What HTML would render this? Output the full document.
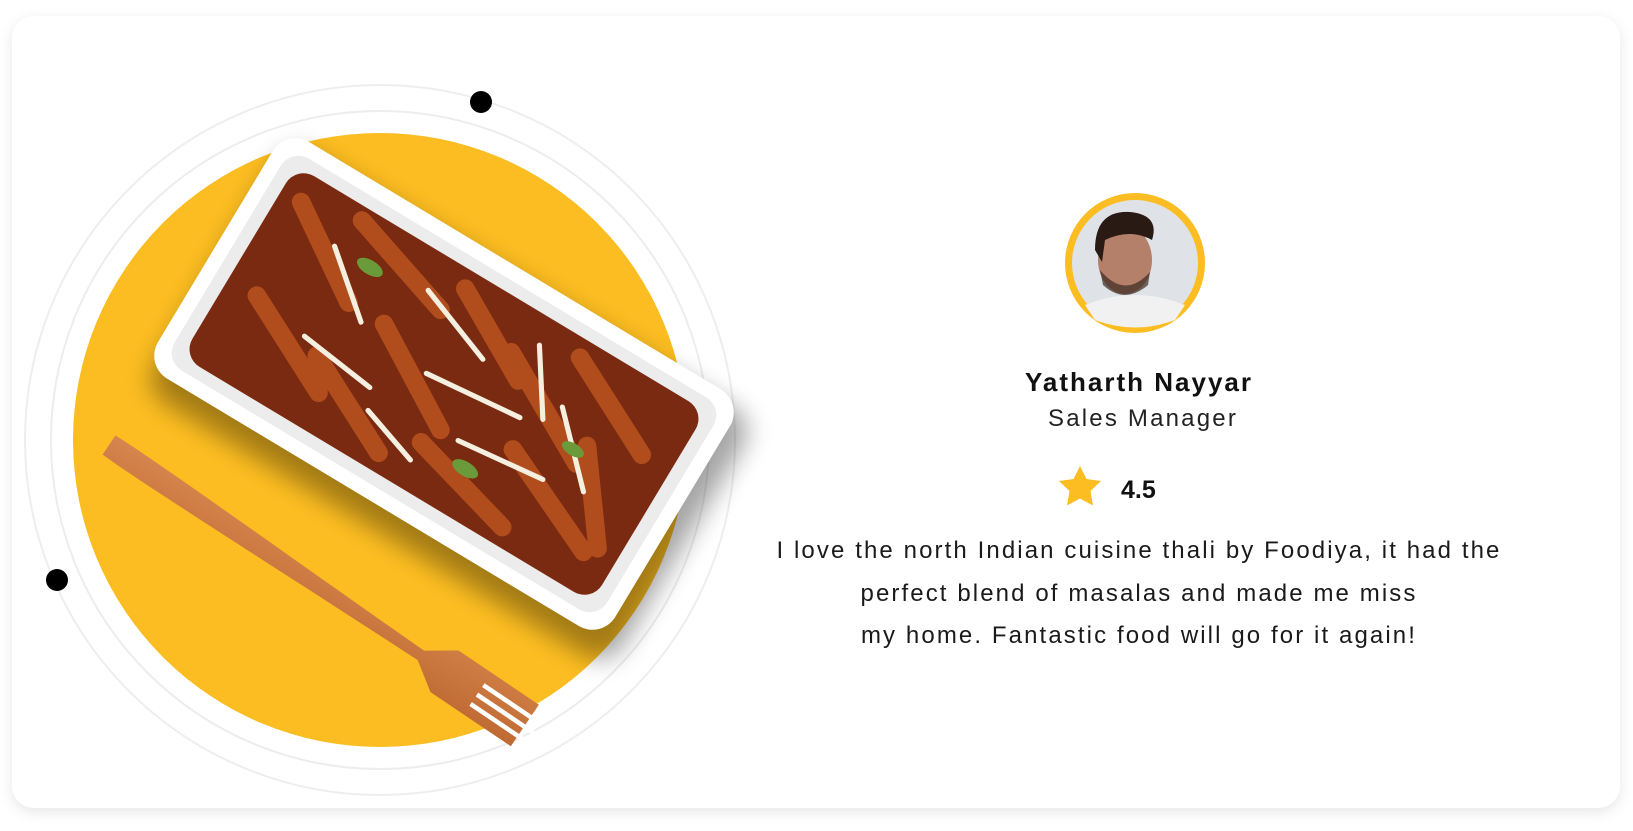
<!DOCTYPE html>
<html><head><meta charset="utf-8"><style>
html,body{margin:0;padding:0;background:#fff;width:1633px;height:831px;overflow:hidden;font-family:"Liberation Sans",sans-serif}
.card{position:absolute;left:12px;top:16px;width:1608px;height:792px;background:#fff;border-radius:22px;box-shadow:0 4px 14px rgba(0,0,0,.10)}
.abs{position:absolute}
.txt{position:absolute;left:739px;width:800px;text-align:center;color:#111;white-space:nowrap}
</style></head><body>
<div class="card"></div>
<svg class="abs" style="left:0;top:0" width="1633" height="831">
<defs>
<filter id="sh" x="-30%" y="-30%" width="160%" height="160%"><feGaussianBlur stdDeviation="12"/></filter>
<linearGradient id="wood" x1="0" y1="0" x2="1" y2="1"><stop offset="0" stop-color="#d98a52"/><stop offset="1" stop-color="#c06a33"/></linearGradient>
</defs>
<circle cx="380" cy="440" r="355" fill="none" stroke="#eee" stroke-width="2"/>
<circle cx="380" cy="440" r="329" fill="none" stroke="#ededed" stroke-width="2"/>
<circle cx="380" cy="440" r="307" fill="#fbbd21"/>
<circle cx="481" cy="102" r="11" fill="#000"/>
<circle cx="57" cy="580" r="11" fill="#000"/>
<g transform="translate(444,384) rotate(31) scale(1.03)">
<rect x="-250" y="-125" width="530" height="280" rx="26" fill="#000" opacity=".35" filter="url(#sh)"/>
<rect x="-259" y="-134" width="518" height="268" rx="26" fill="#fff"/>
<rect x="-245" y="-120" width="490" height="240" rx="20" fill="#ececec"/>
<rect x="-232" y="-108" width="464" height="216" rx="20" fill="#7a2a10"/>
<g stroke="#b8501f" stroke-width="18" stroke-linecap="round" opacity=".9">
<path d="M-210 -80 L-120 -20 M-150 -95 L-40 -60 M-80 -20 L20 40 M-30 -90 L60 -40 M40 -60 L150 0 M100 -90 L200 -40 M-200 20 L-100 70 M-120 40 L-20 90 M10 60 L120 90 M90 20 L200 70 M150 -20 L210 60"/>
</g>
<g stroke="#f5efe0" stroke-width="5" stroke-linecap="round">
<path d="M-160 -60 L-100 -10 M-60 -70 L20 -40 M-20 0 L80 -10 M40 40 L130 30 M110 -40 L170 20 M-140 30 L-60 40 M60 -80 L100 -20 M-50 60 L10 80"/>
</g>
<g fill="#6a9a3a"><ellipse cx="-120" cy="-60" rx="14" ry="7"/><ellipse cx="60" cy="60" rx="14" ry="7"/><ellipse cx="140" cy="-10" rx="12" ry="6"/></g>
</g>
<g transform="translate(109,445) rotate(34) scale(1.14)">
<path d="M0 -10 C40 -12 200 -7 330 -5 L355 -22 L440 -22 L440 22 L355 22 L330 5 C200 7 40 12 0 10 Z" fill="url(#wood)"/>
<g fill="#fff"><rect x="390" y="-11" width="60" height="4"/><rect x="390" y="-1" width="60" height="4"/><rect x="390" y="9" width="60" height="4"/></g>
</g>
<circle cx="1135" cy="263" r="70" fill="#fbbd21"/>
<circle cx="1135" cy="263" r="63" fill="#dfe3e7"/>
<path d="M1085 305 Q1135 285 1185 305 L1175 320 Q1135 335 1095 320Z" fill="#f1f1f1"/>
<ellipse cx="1125" cy="260" rx="27" ry="34" fill="#b5806a"/>
<path d="M1095 250 Q1095 210 1130 212 Q1160 215 1152 240 Q1130 228 1105 240 L1102 262 Z" fill="#2a1a14"/>
<path d="M1100 270 Q1125 300 1150 272 L1148 285 Q1125 305 1103 285Z" fill="#3b2a22" opacity=".7"/>
<path d="M1080 466 l6.5 13 14.5 2 -10.5 10 2.5 14.5 -13 -7 -13 7 2.5 -14.5 -10.5 -10 14.5 -2z" fill="#fbbd21"/>
</svg>
<div class="txt" style="top:367px;font-size:26px;font-weight:bold;letter-spacing:2px">Yatharth Nayyar</div>
<div class="txt" style="top:405px;font-size:24px;color:#222;letter-spacing:2.2px;left:743px">Sales Manager</div>
<div class="abs" style="left:1121px;top:476px;font-size:25px;font-weight:bold;color:#111">4.5</div>
<div class="txt" style="left:739px;top:530px;font-size:24px;line-height:42.5px;color:#1a1a1a;letter-spacing:2.1px">I love the north Indian cuisine thali by Foodiya, it had the<br>perfect blend of masalas and made me miss<br>my home. Fantastic food will go for it again!</div>
</body></html>
